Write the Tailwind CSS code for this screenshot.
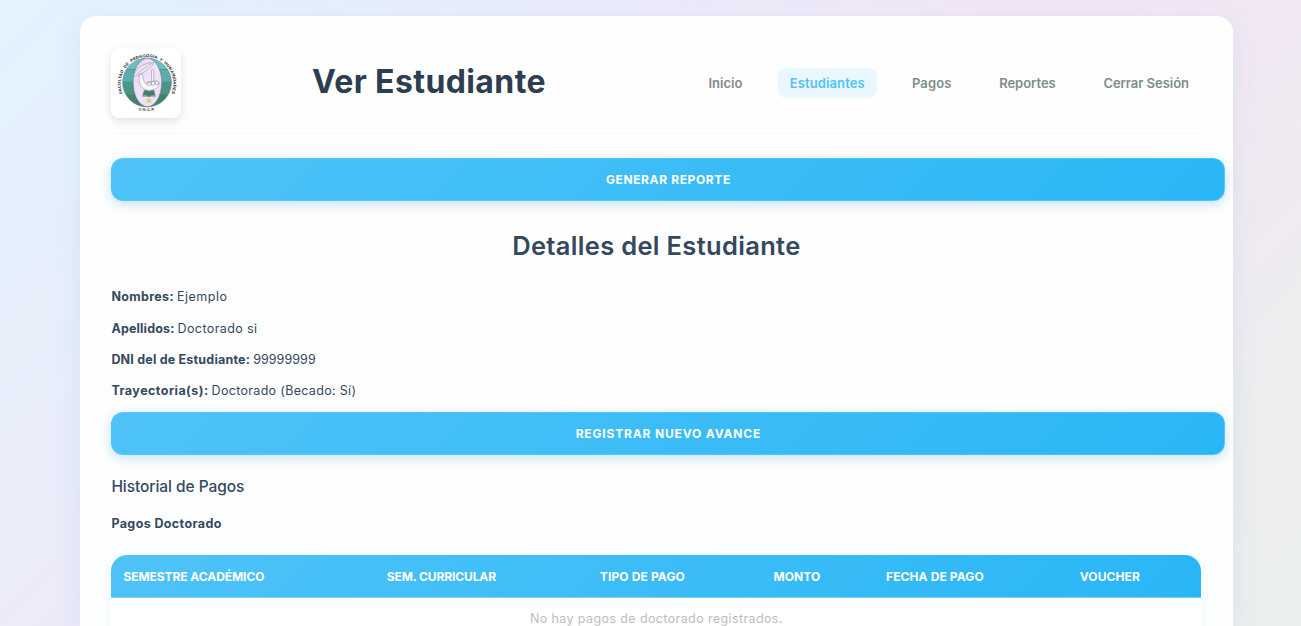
<!DOCTYPE html>
<html lang="es">
<head>
<meta charset="utf-8">
<title>Ver Estudiante</title>
<script src="https://cdn.jsdelivr.net/npm/@tailwindcss/browser@4"></script>
</head>
<body class="h-screen overflow-hidden bg-[linear-gradient(135deg,#e1f3fd_0%,#f3e5f5_50%,#e8f3e9_100%)] bg-[length:100%_860px] bg-no-repeat pt-4 font-['Inter',sans-serif] text-[12.5px] text-[#34495e]">
  <div class="ml-[79.5px] h-[610px] w-[1153.5px] rounded-t-2xl bg-[#fefefe] px-[31.900px] pt-8 shadow-[0_6px_24px_rgba(79,160,247,0.12)]">
    <header class="flex h-[86px] w-[1090px] items-start border-b border-[#f7f8f9]">
      <div class="size-[70px] shrink-0 rounded-lg bg-white shadow-[0_3px_8px_rgba(0,0,0,0.12)]">
        <svg class="size-[70px]" viewBox="0 0 70 70" role="img" aria-label="Facultad de Pedagogía y Humanidades">
          <defs>
            <clipPath id="globe"><circle cx="36" cy="34.5" r="24.4"/></clipPath>
            <path id="ringTop" d="M11.500 45.300A26.400 26.400 0 1 1 60.500 45.300"/>
            <path id="ringBottom" d="M26 62Q36 64 46 62"/>
            <linearGradient id="core" x1="0" y1="0" x2="1" y2="1"><stop stop-color="#e9d2f7"/><stop offset=".55" stop-color="#f0e4fb"/><stop offset="1" stop-color="#e7dff2"/></linearGradient>
          </defs>
          <g clip-path="url(#globe)">
            <rect x="10" y="8" width="52" height="14" fill="#6abfc1"/>
            <rect x="10" y="21.5" width="52" height="13" fill="#5cabae"/>
            <rect x="10" y="34.2" width="52" height="12" fill="#4a9584"/>
            <rect x="10" y="46.2" width="52" height="14" fill="#44806f"/>
            <path d="M10 21.5H62M10 34.2H62M10 46.2H62" stroke="#3c7476" stroke-width=".5"/>
          </g>
          <circle cx="36" cy="34.5" r="24.4" fill="none" stroke="#4f8d8d" stroke-width=".6"/>
          <ellipse cx="36.4" cy="34.5" rx="14.3" ry="24.2" fill="url(#core)" stroke="#69767e" stroke-width=".6"/>
          <g fill="none" stroke="#a2a4ab" stroke-width=".7" stroke-linecap="round" stroke-linejoin="round">
            <path d="M28.500 27C27.500 33 29 38.500 33 41C38 43.800 46 42 48 37C48.800 35 47.600 33 45.500 32.800L40 34L35 36Q31.500 33 31.500 26.500Z" fill="#faf7fd"/>
            <path d="M23 27.500C24 21 33 14.500 42.500 14.500C42.500 18.500 34 24.500 24.500 28.200ZM26 26C30 22.500 36 17.500 41 15.500" fill="#eee6f6"/>
            <path d="M40.500 33V22.500C40.500 21 42.800 21 42.800 22.500V33" fill="#f6f0fc"/>
            <circle cx="38" cy="35.500" r="2.200"/><circle cx="42" cy="35.200" r="2.200"/><circle cx="45.700" cy="35" r="1.900"/>
          </g>
          <path d="M33 42.400Q35.500 41.800 38 43.500Q40.500 41.800 43 42.400L44.200 47.600Q41 46.800 38 48.500Q35 46.800 31.800 47.600Z" fill="#39806d" stroke="#7c8990" stroke-width=".5"/>
          <path d="M38 43.500V48.500M31 48.200H45" stroke="#59656c" stroke-width=".6"/>
          <path d="M34.800 55.300L36.600 52.500L35 51.800L37.200 51.300L37.800 49.200L38.500 51.300L40.700 51.700L39.200 52.700L40.600 55.300L37.800 53.700Z" fill="#dccb4c"/>
          <g fill="#262626" font-family="Liberation Sans, sans-serif" font-weight="700">
            <text font-size="4.100"><textPath href="#ringTop" textLength="103" lengthAdjust="spacingAndGlyphs">FACULTAD&#160;&#160;DE&#160;&#160;PEDAGOGÍA&#160;&#160;Y&#160;&#160;HUMANIDADES</textPath></text>
            <text font-size="3.800"><textPath href="#ringBottom" startOffset="1.500" textLength="16.500" lengthAdjust="spacing">U.N.C.P.</textPath></text>
          </g>
        </svg>
      </div>
      <h1 class="ml-[130.500px] mt-[11px] w-[240px] shrink-0 whitespace-nowrap text-[32px] leading-[46px] font-bold tracking-[0.4px] text-[#2c3e50]">Ver Estudiante</h1>
      <nav class="mt-5 ml-auto flex h-[30px] w-[505px] shrink-0 justify-between text-[13px] leading-[30px] font-semibold whitespace-nowrap text-[#7f8c8d]">
        <a class="w-[58px] pl-3 tracking-[0.04px]">Inicio</a>
        <a class="w-[99px] rounded-lg bg-[#ebf7fe] pl-3 tracking-[0.13px] text-[#4fc3f7]">Estudiantes</a>
        <a class="w-16 pl-3 tracking-[0.15px]">Pagos</a>
        <a class="w-[81px] pl-3 tracking-[-0.02px]">Reportes</a>
        <a class="w-[110px] pl-3 tracking-[-0.04px]">Cerrar Sesión</a>
      </nav>
    </header>

    <button class="mt-[24px] flex h-[43px] w-[1114px] items-center justify-center rounded-xl border border-[#63c9f8]/60 bg-[linear-gradient(135deg,#4fc3f7,#29b6f6)] text-xs font-bold tracking-[0.62px] text-white shadow-[0_3px_12px_rgba(41,150,200,0.28)]">GENERAR REPORTE</button>

    <h2 class="mt-[25.500px] w-[1090px] text-center text-[25.500px] leading-[37px] font-semibold tracking-[0.32px]">Detalles del Estudiante</h2>

    <div class="mt-[17.800px] leading-[31.300px]">
      <p class="flex gap-[3px]"><strong class="tracking-[0.33px]">Nombres:</strong><span class="tracking-[0.51px]">Ejemplo</span></p>
      <p class="flex gap-[3px]"><strong class="tracking-[0.16px]">Apellidos:</strong><span class="tracking-[0.4px]">Doctorado si</span></p>
      <p class="flex gap-[3px]"><strong class="tracking-[0.2px]">DNI del de Estudiante:</strong><span class="tracking-[0.07px]">99999999</span></p>
      <p class="flex gap-[3px]"><strong class="tracking-[0.46px]">Trayectoria(s):</strong><span class="tracking-[0.32px]">Doctorado (Becado: Sí)</span></p>
    </div>

    <button class="mt-[5.500px] flex h-[43px] w-[1114px] items-center justify-center rounded-xl border border-[#63c9f8]/60 bg-[linear-gradient(135deg,#4fc3f7,#29b6f6)] pt-px text-xs font-bold tracking-[0.84px] text-white shadow-[0_3px_12px_rgba(41,150,200,0.28)]">REGISTRAR NUEVO AVANCE</button>

    <h3 class="mt-5 text-[15.500px] leading-6 font-medium tracking-[-0.06px]">Historial de Pagos</h3>
    <h4 class="mt-[15px] leading-5 font-bold tracking-[0.38px]">Pagos Doctorado</h4>

    <div class="mt-[21px] h-[71px] w-[1090px] overflow-hidden rounded-t-2xl bg-white shadow-[0_4px_20px_rgba(79,195,247,0.1)]">
      <div class="grid h-[43px] grid-cols-[229px_202px_200px_109px_167px_183px] items-center border-b border-[#7dd3fa] bg-[linear-gradient(135deg,#4fc3f7,#29b6f6)] pt-0.5 text-center text-xs font-bold text-white">
        <span class="pl-3 text-left tracking-[-0.06px]">SEMESTRE ACADÉMICO</span>
        <span class="tracking-[-0.12px]">SEM. CURRICULAR</span>
        <span class="tracking-[0.14px]">TIPO DE PAGO</span>
        <span class="tracking-[0.08px]">MONTO</span>
        <span class="tracking-[0.12px]">FECHA DE PAGO</span>
        <span class="tracking-[0.1px]">VOUCHER</span>
      </div>
      <p class="text-center leading-[42px] tracking-[0.39px] text-[#bdbdbd]">No hay pagos de doctorado registrados.</p>
    </div>
  </div>
</body>
</html>
